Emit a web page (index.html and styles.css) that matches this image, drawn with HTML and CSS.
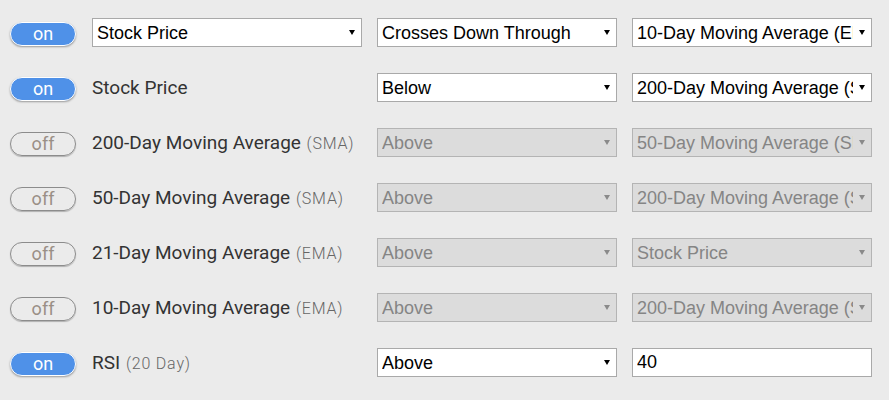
FILE: index.html
```html
<!DOCTYPE html>
<html>
	<head>
		<title>Screener Rules</title>
		<link rel="stylesheet" href="styles.css">
	</head>
	<body>
	<div id="rules">
		<div class="rule">
			<span class="toggle on">on</span>
			<span class="pick wide"><select><option>Stock Price</option></select></span>
			<span class="pick"><select><option>Crosses Down Through</option></select></span>
			<span class="pick"><select><option>10-Day Moving Average (EMA)</option></select></span>
		</div>
		<div class="rule">
			<span class="toggle on">on</span>
			<span class="label">Stock Price</span>
			<span class="pick"><select><option>Below</option></select></span>
			<span class="pick"><select><option>200-Day Moving Average (SMA)</option></select></span>
		</div>
		<div class="rule">
			<span class="toggle">off</span>
			<span class="label">200-Day Moving Average <small>(SMA)</small></span>
			<span class="pick dis"><select disabled><option>Above</option></select></span>
			<span class="pick dis"><select disabled><option>50-Day Moving Average (SMA)</option></select></span>
		</div>
		<div class="rule">
			<span class="toggle">off</span>
			<span class="label">50-Day Moving Average <small>(SMA)</small></span>
			<span class="pick dis"><select disabled><option>Above</option></select></span>
			<span class="pick dis"><select disabled><option>200-Day Moving Average (SMA)</option></select></span>
		</div>
		<div class="rule">
			<span class="toggle">off</span>
			<span class="label">21-Day Moving Average <small>(EMA)</small></span>
			<span class="pick dis"><select disabled><option>Above</option></select></span>
			<span class="pick dis"><select disabled><option>Stock Price</option></select></span>
		</div>
		<div class="rule">
			<span class="toggle">off</span>
			<span class="label">10-Day Moving Average <small>(EMA)</small></span>
			<span class="pick dis"><select disabled><option>Above</option></select></span>
			<span class="pick dis"><select disabled><option>200-Day Moving Average (SMA)</option></select></span>
		</div>
		<div class="rule">
			<span class="toggle on">on</span>
			<span class="label">RSI <small>(20 Day)</small></span>
			<span class="pick"><select><option>Above</option></select></span>
			<input class="num" type="text" value="40" />
		</div>
	</div>
	</body>
</html>
```

FILE: styles.css
```css
body{margin:0; background:#ebebeb; font-family:Roboto, "Liberation Sans", sans-serif;}
#rules{padding:5px 0 0 10px;}
.rule{display:flex; align-items:center; height:55px;}

.toggle
{
	box-sizing:border-box;
	width:66px;
	height:24px;
	margin-right:16px;
	border-radius:12px;
	border:1px solid #8c8c8c;
	box-shadow:0 1px 1px rgba(0,0,0,.25);
	text-align:center;
	font-size:18px;
	line-height:21px;
	color:#9a8f86;
	margin-top:3px;
}
.toggle.on{background:#4f91e8; color:#fff; border-color:#fff; box-shadow:0 1px 2px rgba(0,0,0,.35);}

.label{width:270px; margin-right:15px; font-size:19px; color:#333;}
.label small{font-size:16px; font-weight:300; letter-spacing:.8px; color:#666; margin-left:1px;}

.pick{position:relative; display:block; width:240px; margin-right:15px;}
.pick.wide{width:270px;}
.pick select
{
	-webkit-appearance:none;
	appearance:none;
	display:block;
	box-sizing:border-box;
	width:100%;
	height:29px;
	margin:0;
	padding:0 18px 0 4px;
	border:1px solid #a9a9a9;
	border-radius:0;
	background:#fff;
	color:#000;
	font-family:"Liberation Sans", Arial, sans-serif;
	font-size:18px;
	white-space:nowrap;
	overflow:hidden;
}
.pick::after
{
	content:"";
	position:absolute;
	right:7px;
	top:12px;
	border-left:3px solid transparent;
	border-right:3px solid transparent;
	border-top:5px solid #000;
}
.pick.dis select{background:#dcdcdc; border-color:#b4b4b4; color:#858585; opacity:1;}
.pick.dis::after{border-top-color:#8a8a8a;}

.num
{
	box-sizing:border-box;
	width:240px;
	height:29px;
	margin:0;
	padding:0 4px;
	border:1px solid #a9a9a9;
	border-radius:0;
	font-family:"Liberation Sans", Arial, sans-serif;
	font-size:18px;
	color:#000;
}
```
